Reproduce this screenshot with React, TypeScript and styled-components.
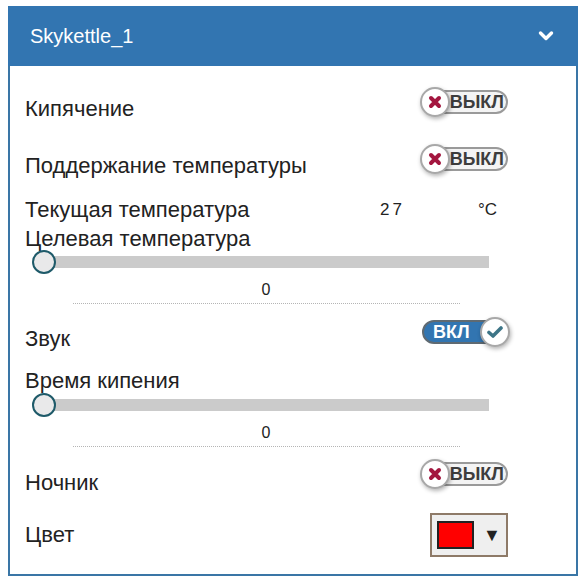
import React from "react";
import styled, { createGlobalStyle } from "styled-components";

const Global = createGlobalStyle`
  html, body { margin: 0; padding: 0; background: #fff; }
  body { font-family: "Liberation Sans", Arial, sans-serif; color: #222; }
`;

const Panel = styled.div`
  margin: 6px 0 0 8px;
  width: 570px;
  height: 570px;
  box-sizing: border-box;
  border: 2px solid #3a76a6;
  border-top: none;
  background: #fff;
  display: flex;
  flex-direction: column;
`;

const Header = styled.div`
  height: 60px;
  margin: 0 -2px;
  background: #3275b1;
  color: #fff;
  display: flex;
  align-items: center;
  justify-content: space-between;
  padding: 0 24px 0 22px;
  font-size: 20px;
`;

const Content = styled.div`
  display: flex;
  flex-direction: column;
  padding: 21px 66px 0 15px;
`;

const SwitchRow = styled.div<{ $mt?: number }>`
  display: flex;
  justify-content: space-between;
  align-items: flex-start;
  margin-top: ${(p) => p.$mt ?? 0}px;
  height: 40px;
`;

const Label = styled.div<{ $mt?: number }>`
  font-size: 22px;
  line-height: 24px;
  margin-top: ${(p) => p.$mt ?? 0}px;
  color: #222;
`;

const SwitchLabel = styled(Label)<{ $lt?: number }>`
  margin-top: ${(p) => p.$lt ?? 10}px;
`;

const Toggle = styled.div`
  position: relative;
  width: 90px;
  height: 30px;
  flex: none;
`;

const Pill = styled.div<{ $on: boolean }>`
  position: absolute;
  left: 2px;
  right: 2px;
  top: 3px;
  height: 24px;
  box-sizing: border-box;
  border-radius: 12px;
  border: 2px solid ${(p) => (p.$on ? "#5f6a72" : "#9a9a9a")};
  background: ${(p) => (p.$on ? "#3275b1" : "#f4f4f4")};
  color: ${(p) => (p.$on ? "#fff" : "#3d3d3d")};
  font-weight: bold;
  font-size: 18px;
  line-height: 20px;
  display: flex;
  align-items: center;
  justify-content: ${(p) => (p.$on ? "flex-start" : "flex-end")};
  padding: ${(p) => (p.$on ? "0 0 0 9px" : "0 2px 0 0")};
`;

const Knob = styled.div<{ $on: boolean }>`
  position: absolute;
  top: 0;
  ${(p) => (p.$on ? "right: 0;" : "left: 0;")}
  width: 30px;
  height: 30px;
  box-sizing: border-box;
  border-radius: 50%;
  border: 2px solid #a8a8a8;
  background: #fff;
  box-shadow: 1px 2px 4px rgba(0, 0, 0, 0.3);
  display: flex;
  align-items: center;
  justify-content: center;
`;

const Switch = ({ on }: { on: boolean }) => (
  <Toggle>
    <Pill $on={on}>{on ? "ВКЛ" : "ВЫКЛ"}</Pill>
    <Knob $on={on}>
      {on ? (
        <svg width="16" height="14" viewBox="0 0 16 14">
          <path d="M2 7.5 L6 11 L14 3" fill="none" stroke="#3d7587" strokeWidth="3.6" strokeLinecap="round" strokeLinejoin="round" />
        </svg>
      ) : (
        <svg width="14" height="14" viewBox="0 0 14 14">
          <path d="M3 3 L11 11 M11 3 L3 11" fill="none" stroke="#a3163f" strokeWidth="4" strokeLinecap="round" />
        </svg>
      )}
    </Knob>
  </Toggle>
);

const InfoRow = styled.div`
  display: grid;
  grid-template-columns: 355px 98px 1fr;
  margin-top: 14px;
  align-items: center;
  height: 24px;
`;

const Value = styled.span<{ $spacing?: number }>`
  font-size: 17px;
  letter-spacing: ${(p) => p.$spacing ?? 0}px;
  color: #222;
`;

const SliderWrap = styled.div<{ $mt?: number }>`
  position: relative;
  height: 24px;
  margin: ${(p) => p.$mt ?? 0}px 21px 0 7px;
  display: flex;
  align-items: center;
`;

const Track = styled.div`
  flex: 1;
  height: 12px;
  margin-left: 13px;
  background: #cbcbcb;
`;

const Thumb = styled.div`
  position: absolute;
  left: 0;
  top: 0;
  width: 24px;
  height: 24px;
  box-sizing: border-box;
  border-radius: 50%;
  border: 2px solid #1e5a69;
  background: #e9e9ea;
`;

const SliderValue = styled.div`
  text-align: center;
  font-size: 16px;
  line-height: 22px;
  margin-top: 5px;
  width: 482px;
  color: #222;
`;

const Dotted = styled.div`
  margin: 2px 0 0 48px;
  width: 387px;
  border-top: 1px dotted #b5b5b5;
`;

const ColorRow = styled.div`
  display: flex;
  justify-content: space-between;
  align-items: center;
  margin-top: 14px;
`;

const Picker = styled.div`
  width: 78px;
  height: 44px;
  box-sizing: border-box;
  border: 2px solid #8e7a68;
  background: #efefef;
  display: flex;
  align-items: center;
  padding-left: 5px;
  gap: 9px;
  margin-right: 2px;
`;

const Swatch = styled.div`
  width: 37px;
  height: 28px;
  box-sizing: border-box;
  border: 2px solid #222;
  background: #ff0000;
`;

const Arrow = styled.span`
  font-size: 18px;
  color: #222;
`;

const Slider = ({ mt }: { mt?: number }) => (
  <SliderWrap $mt={mt}>
    <Thumb />
    <Track />
  </SliderWrap>
);

export default function App() {
  return (
    <>
      <Global />
      <Panel>
        <Header>
          <span>Skykettle_1</span>
          <svg width="16" height="12" viewBox="0 0 16 12">
            <path d="M2.5 3 L8 8.5 L13.5 3" fill="none" stroke="#fff" strokeWidth="3.4" strokeLinecap="round" strokeLinejoin="round" />
          </svg>
        </Header>
        <Content>
          <SwitchRow>
            <SwitchLabel>Кипячение</SwitchLabel>
            <Switch on={false} />
          </SwitchRow>
          <SwitchRow $mt={17}>
            <SwitchLabel>Поддержание температуры</SwitchLabel>
            <Switch on={false} />
          </SwitchRow>
          <InfoRow>
            <Label>Текущая температура</Label>
            <Value $spacing={3}>27</Value>
            <Value>°C</Value>
          </InfoRow>
          <Label $mt={5}>Целевая температура</Label>
          <Slider mt={-1} />
          <SliderValue>0</SliderValue>
          <Dotted />
          <SwitchRow $mt={13}>
            <SwitchLabel>Звук</SwitchLabel>
            <Switch on={true} />
          </SwitchRow>
          <Label $mt={12}>Время кипения</Label>
          <Slider />
          <SliderValue>0</SliderValue>
          <Dotted />
          <SwitchRow $mt={12}>
            <SwitchLabel $lt={12}>Ночник</SwitchLabel>
            <Switch on={false} />
          </SwitchRow>
          <ColorRow>
            <Label>Цвет</Label>
            <Picker>
              <Swatch />
              <Arrow>▼</Arrow>
            </Picker>
          </ColorRow>
        </Content>
      </Panel>
    </>
  );
}
